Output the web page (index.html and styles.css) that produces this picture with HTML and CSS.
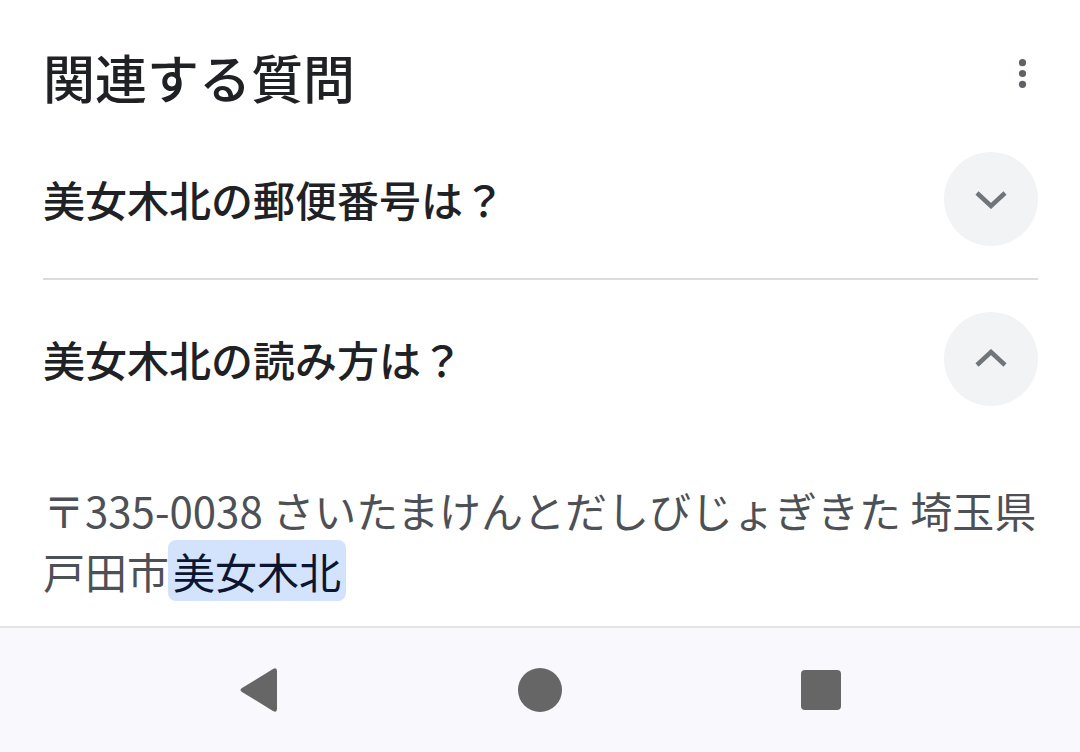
FILE: index.html
```html
<!DOCTYPE html>
<html lang="ja">

<head>
  <meta charset="UTF-8" />
  <meta name="viewport" content="width=device-width, initial-scale=1.0" />
  <title>関連する質問</title>
  <link rel="stylesheet" href="styles.css">
</head>

<body>
  <div class="page">
    <div class="header">
      <h1 class="title">関連する質問</h1>
      <button class="more" aria-label="その他">
        <svg width="10" height="34" viewBox="0 0 10 34">
          <circle cx="5" cy="5" r="4" />
          <circle cx="5" cy="17" r="4" />
          <circle cx="5" cy="29" r="4" />
        </svg>
      </button>
    </div>

    <div class="question">
      <div class="question-text">美女木北の郵便番号は？</div>
      <button class="toggle" aria-label="開く">
        <svg width="34" height="20" viewBox="0 0 34 20">
          <path d="M3 4 L17 17 L31 4" />
        </svg>
      </button>
    </div>

    <div class="question open">
      <div class="question-text">美女木北の読み方は？</div>
      <button class="toggle" aria-label="閉じる">
        <svg width="34" height="20" viewBox="0 0 34 20">
          <path d="M3 16 L17 3 L31 16" />
        </svg>
      </button>
    </div>

    <p class="answer">〒335-0038 さいたまけんとだしびじょぎきた 埼玉県戸田市<span class="mark">美女木北</span></p>
  </div>

  <div class="navbar">
    <div class="nav-btn">
      <svg width="44" height="48" viewBox="0 0 44 48">
        <path d="M40 5 Q40 1 36 3 L5 22 Q2 24 5 26 L36 45 Q40 47 40 43 Z" />
      </svg>
    </div>
    <div class="nav-btn">
      <svg width="46" height="46" viewBox="0 0 46 46">
        <circle cx="23" cy="23" r="22" />
      </svg>
    </div>
    <div class="nav-btn">
      <svg width="42" height="42" viewBox="0 0 42 42">
        <rect x="1" y="1" width="40" height="40" rx="4" />
      </svg>
    </div>
  </div>
</body>

</html>
```

FILE: styles.css
```css
* {
  box-sizing: border-box;
  margin: 0;
  padding: 0;
}

body {
  font-family: "Noto Sans CJK JP", "Noto Sans", sans-serif;
  background-color: #ffffff;
  color: #202124;
  width: 1080px;
  height: 752px;
  overflow: hidden;
  display: flex;
  flex-direction: column;
}

.page {
  flex: 1;
  min-height: 0;
  padding: 0 42px 0 43px;
}

.header {
  height: 120px;
  padding-top: 34px;
  display: flex;
  align-items: center;
  justify-content: space-between;
}

.title {
  font-size: 52px;
  font-weight: 500;
  line-height: 86px;
  letter-spacing: 0;
}

.more {
  background: none;
  border: none;
  width: 30px;
  height: 40px;
  display: flex;
  align-items: center;
  justify-content: center;
  margin-right: 1px;
  margin-top: -8px;
}

.more svg {
  fill: #5f6368;
  width: 9px;
  height: 31px;
}

.question {
  display: flex;
  align-items: center;
  justify-content: space-between;
  padding: 32px 0;
  border-bottom: 2px solid #dadce0;
}

.question.open {
  border-bottom: none;
}

.question-text {
  font-size: 42px;
  font-weight: 500;
  line-height: 60px;
  color: #202124;
}

.toggle {
  width: 94px;
  height: 94px;
  border-radius: 50%;
  border: none;
  background-color: #f1f3f4;
  display: flex;
  align-items: center;
  justify-content: center;
}

.toggle svg {
  fill: none;
  stroke: #70757a;
  stroke-width: 4.5;
}

.answer {
  margin-top: 41px;
  font-size: 42px;
  line-height: 61px;
  color: #4d5156;
}

.mark {
  background-color: #d3e3fd;
  color: #0b1530;
  border-radius: 8px;
  padding: 0 5px;
  margin-left: -1px;
}

.navbar {
  height: 126px;
  flex-shrink: 0;
  background-color: #f8f8fd;
  border-top: 2px solid #e2e2e7;
  display: flex;
  align-items: center;
  justify-content: center;
  gap: 201px;
}

.nav-btn {
  width: 80px;
  height: 80px;
  display: flex;
  align-items: center;
  justify-content: center;
}

.nav-btn svg {
  fill: #666666;
}
```
